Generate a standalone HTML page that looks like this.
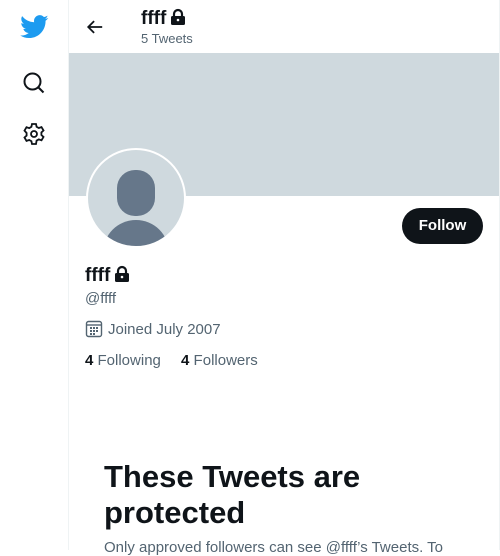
<!DOCTYPE html>
<html><head><meta charset="utf-8"><style>
body{margin:0;width:500px;height:550px;overflow:hidden;background:#fff;font-family:"Liberation Sans",sans-serif;color:#0f1419;position:relative}
.side{position:absolute;left:0;top:0;width:68px;height:550px;border-right:1px solid #eff3f4}
.main{position:absolute;left:69px;top:0;width:430px;height:550px;border-right:1px solid #eff3f4}
.a{position:absolute}
.gray{color:#536471}
</style></head><body>
<div class="side">
<svg class="a" style="left:20px;top:15px" width="29" height="24" viewBox="0 0 24 20"><path fill="#1d9bf0" d="M23.6 2.4c-.9.4-1.8.6-2.8.8 1-.6 1.8-1.6 2.1-2.7-.9.6-2 1-3.1 1.2C19 .7 17.8.1 16.4.1c-2.7 0-4.8 2.2-4.8 4.8 0 .4 0 .8.1 1.1C7.7 5.8 4.1 3.9 1.7.9c-.4.7-.7 1.6-.7 2.4 0 1.7.9 3.2 2.2 4-.8 0-1.5-.2-2.2-.6v.1c0 2.3 1.7 4.3 3.9 4.7-.4.1-.8.2-1.3.2-.3 0-.6 0-.9-.1.6 1.9 2.4 3.3 4.5 3.4-1.7 1.3-3.7 2.1-6 2.1-.4 0-.8 0-1.2-.1 2.1 1.4 4.7 2.2 7.4 2.2 8.9 0 13.8-7.4 13.8-13.8v-.6c1-.7 1.8-1.6 2.4-2.5z"/></svg>
<svg class="a" style="left:22px;top:71px" width="24" height="24" viewBox="0 0 24 24" fill="none" stroke="#0f1419" stroke-width="2"><circle cx="10.5" cy="10.5" r="8"/><path d="M16.5 16.5l5 5"/></svg>
<svg class="a" style="left:22px;top:122px" width="24" height="24" viewBox="0 0 24 24" fill="none" stroke="#0f1419" stroke-width="1.8"><circle cx="12" cy="12" r="3"/><path d="M10 2h4l.6 2.8 2.2 1.2 2.7-.9 2 3.4-2.1 1.9v2.6l2.1 1.9-2 3.4-2.7-.9-2.2 1.2L14 22h-4l-.6-2.8-2.2-1.2-2.7.9-2-3.4 2.1-1.9v-2.6L2.5 8.6l2-3.4 2.7.9L9.4 4.8z"/></svg>
</div>
<div class="main">
<svg class="a" style="left:17px;top:18px" width="18" height="18" viewBox="0 0 20 20" fill="none" stroke="#0f1419" stroke-width="2"><path d="M18 10H3M9 3.5L2.5 10 9 16.5"/></svg>
<div class="a" style="left:72px;top:8px;font-size:19px;font-weight:bold">ffff <svg width="18" height="18" viewBox="0 0 18 18" style="vertical-align:-2px;margin-left:-3px"><path d="M5 8V6a4 4 0 018 0v2" fill="none" stroke="#0f1419" stroke-width="2.2"/><rect x="2" y="8" width="14" height="9" rx="1.5" fill="#0f1419"/><circle cx="9" cy="12" r="1.3" fill="#fff"/></svg></div>
<div class="a gray" style="left:72px;top:31px;font-size:13px">5 Tweets</div>
<div class="a" style="left:0;top:53px;width:430px;height:143px;background:#cfd9de"></div>
<div class="a" style="left:17px;top:148px;width:96px;height:96px;border-radius:50%;border:2px solid #fff;background:#cfd9de;overflow:hidden">
<div class="a" style="left:29px;top:20px;width:38px;height:46px;border-radius:18px;background:#66778a"></div>
<div class="a" style="left:15px;top:70px;width:66px;height:50px;border-radius:33px 33px 0 0;background:#66778a"></div>
</div>
<div class="a" style="left:333px;top:208px;width:81px;height:36px;border-radius:18px;background:#0f1419;color:#fff;font-weight:bold;font-size:15px;line-height:36px;text-align:center">Follow</div>
<div class="a" style="left:16px;top:265px;font-size:19px;font-weight:bold">ffff <svg width="18" height="18" viewBox="0 0 18 18" style="vertical-align:-2px;margin-left:-3px"><path d="M5 8V6a4 4 0 018 0v2" fill="none" stroke="#0f1419" stroke-width="2.2"/><rect x="2" y="8" width="14" height="9" rx="1.5" fill="#0f1419"/><circle cx="9" cy="12" r="1.3" fill="#fff"/></svg></div>
<div class="a gray" style="left:16px;top:290px;font-size:15px">@ffff</div>
<svg class="a" style="left:16px;top:320px" width="18" height="18" viewBox="0 0 18 18" fill="none" stroke="#536471" stroke-width="1.4"><rect x="1.5" y="1.5" width="15" height="15" rx="2"/><path d="M1.5 5h15"/><g fill="#536471" stroke="none"><rect x="5" y="7" width="2" height="2"/><rect x="8" y="7" width="2" height="2"/><rect x="11" y="7" width="2" height="2"/><rect x="5" y="10" width="2" height="2"/><rect x="8" y="10" width="2" height="2"/><rect x="11" y="10" width="2" height="2"/><rect x="5" y="13" width="2" height="2"/><rect x="8" y="13" width="2" height="2"/></g></svg>
<div class="a gray" style="left:39px;top:321px;font-size:15px">Joined July 2007</div>
<div class="a gray" style="left:16px;top:352px;font-size:15px"><b style="color:#0f1419">4</b> Following <span style="margin-left:16px"><b style="color:#0f1419">4</b> Followers</span></div>
<div class="a" style="left:35px;top:459px;font-size:31px;font-weight:bold;line-height:36px">These Tweets are<br>protected</div>
<div class="a gray" style="left:35px;top:539px;font-size:15px;white-space:nowrap">Only approved followers can see @ffff’s Tweets. To</div>
</div>
</body></html>
